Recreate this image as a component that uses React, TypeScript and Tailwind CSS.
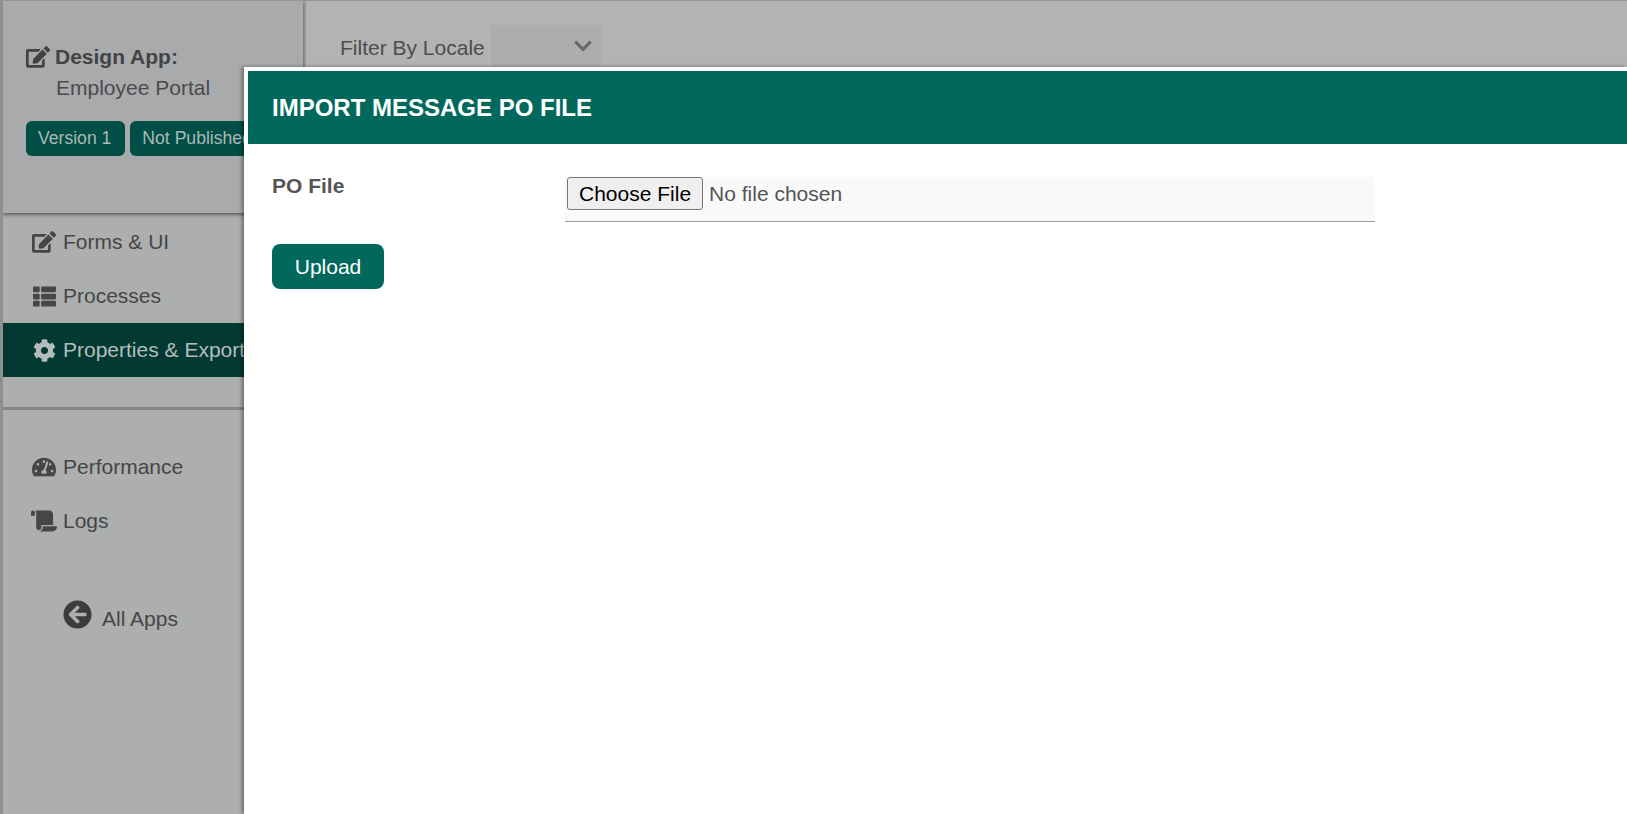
import {
  FaArrowCircleLeft,
  FaChevronDown,
  FaCog,
  FaEdit,
  FaScroll,
  FaTachometerAlt,
  FaThList,
} from "react-icons/fa";
import type { IconType } from "react-icons";

function NavItem({
  icon: Icon,
  label,
  active,
  iconClass = "h-[23px] w-[23px]",
}: {
  icon: IconType;
  label: string;
  active?: boolean;
  iconClass?: string;
}) {
  return (
    <div
      className={[
        "flex h-[54px] items-center pl-[29px] text-[21px] whitespace-nowrap",
        active ? "bg-[#023a33] text-[#b4bdbb]" : "text-[#464646]",
      ].join(" ")}
    >
      <span className="flex w-[24px] justify-center">
        <Icon className={iconClass} />
      </span>
      <span className="ml-[7px]">{label}</span>
    </div>
  );
}

export default function App() {
  return (
    <div className="relative flex h-screen w-full overflow-hidden border-t border-l-[3px] border-t-[#969696] border-l-[#8f8f8f] bg-[#b3b3b3] font-['Liberation_Sans',Arial,sans-serif]">
      {/* Sidebar */}
      <aside className="flex w-[303px] shrink-0 flex-col border-r-[3px] border-r-[#9b9b9b] bg-[#adaeae]">
        <div className="h-[212px] shrink-0 bg-[#a9aaac] pt-[40px] pl-[23px] shadow-[0_2px_3px_rgba(0,0,0,0.45)]">
          <div className="flex items-center text-[21px] font-bold text-[#434345]">
            <FaEdit className="h-[24px] w-[24px]" />
            <span className="ml-[5px]">Design App:</span>
          </div>
          <div className="mt-[3px] ml-[30px] text-[21px] leading-[24px] text-[#4a4a4c]">Employee Portal</div>
          <div className="mt-[21px] flex gap-[5px] text-[17.6px] whitespace-nowrap text-[#a9bab7]">
            <span className="flex h-[35px] items-center rounded-[6px] bg-[#014e46] pr-[14px] pl-[12px]">Version 1</span>
            <span className="flex h-[35px] items-center rounded-[6px] bg-[#014e46] px-[12px]">Not Published</span>
          </div>
        </div>

        <nav className="mt-[2px] pb-[30px]">
          <NavItem icon={FaEdit} label="Forms & UI" iconClass="h-[24px] w-[24px] shrink-0" />
          <NavItem icon={FaThList} label="Processes" />
          <NavItem icon={FaCog} label="Properties & Export" active />
        </nav>
        <div className="h-[3px] shrink-0 bg-[#858686]" />

        <div className="mt-[30px]">
          <NavItem icon={FaTachometerAlt} label="Performance" iconClass="h-[24px] w-[24px]" />
          <NavItem icon={FaScroll} label="Logs" iconClass="h-[26px] w-[26px] shrink-0" />
        </div>

        <div className="mt-[54px] flex items-center pl-[60px] text-[21px] text-[#464646]">
          <FaArrowCircleLeft className="h-[29px] w-[29px] -translate-y-[3px] text-[#3c3c3e]" />
          <span className="ml-[10px] translate-y-[1px]">All Apps</span>
        </div>
      </aside>

      {/* Page behind the dialog */}
      <main className="flex h-[66px] flex-1 items-start pt-[24px] pl-[34px] text-[21px] text-[#4d4d4d]">
        <span className="mt-[7px]">Filter By Locale</span>
        <div className="ml-[6px] flex h-[44px] w-[110px] items-center justify-end bg-[#adadad] pr-[8px] text-[#686868]">
          <FaChevronDown className="h-[20px] w-[20px] -translate-y-[1px]" />
        </div>
      </main>

      {/* Dialog */}
      <div className="absolute top-[66px] right-0 bottom-0 left-[241px] border-t-4 border-l-4 border-white bg-white shadow-[-2px_0_4px_rgba(0,0,0,0.4)]">
        <div className="flex h-[73px] items-center bg-[#01695c] pl-[24px] text-[24px] font-bold text-white">
          IMPORT MESSAGE PO FILE
        </div>
        <div className="flex pt-[33px] pl-[24px]">
          <label className="-mt-[6px] w-[293px] text-[21px] leading-[30px] font-bold text-[#555555]">PO File</label>
          <div className="h-[45px] w-[810px] border-b-[1.5px] border-b-[#9a9a9a] bg-[#f9f9f9] pl-[2px]">
            <input
              type="file"
              className="block h-[33px] w-full text-[21px] text-[#555555] file:mr-[6px] file:h-[33px] file:rounded-[3px] file:border file:border-[#767676] file:bg-[#efefef] file:px-[11px] file:text-[21px] file:text-black"
            />
          </div>
        </div>
        <button className="mt-[22px] ml-[24px] flex h-[45px] w-[112px] items-center justify-center rounded-[8px] bg-[#01695c] text-[21px] text-white">
          Upload
        </button>
      </div>
    </div>
  );
}
